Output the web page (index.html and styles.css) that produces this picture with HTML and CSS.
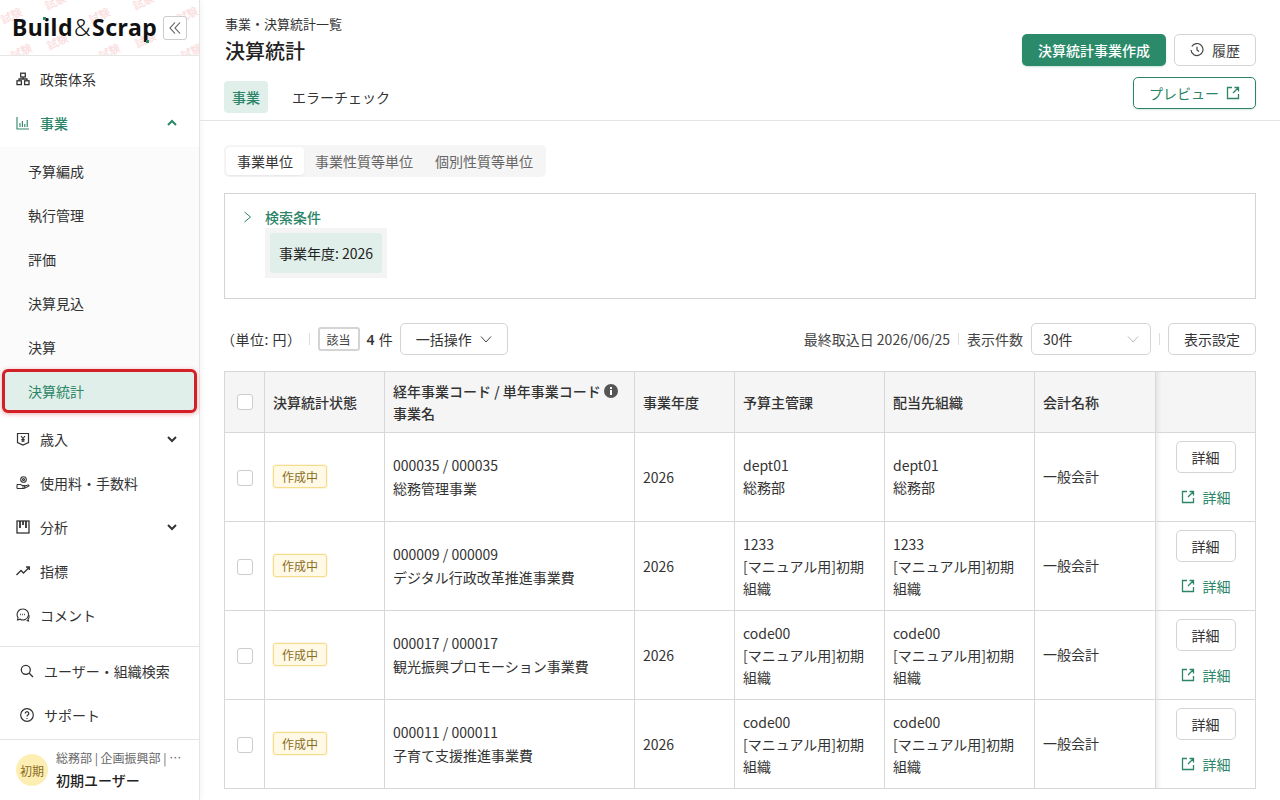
FILE: index.html
```html
<!DOCTYPE html>
<html lang="ja">
<head>
<meta charset="utf-8">
<title>決算統計</title>
<link rel="stylesheet" href="styles.css">
</head>
<body>
<div class="app">
  <aside class="sidebar">
    <div class="brand">
      <div class="marks" aria-hidden="true">
        <span class="mark m1">試験</span><span class="mark m2">試験</span><span class="mark m3">試験</span><span class="mark m4">試験</span><span class="mark m5">試験</span><span class="mark m6">試験</span><span class="mark m7">試験</span><span class="mark m8">試験</span><span class="mark m9">試験</span><span class="mark m10">試験</span>
      </div>
      <div class="logo">Build<span class="amp">&amp;</span>Scrap</div>
      <span class="dot dot-i"></span><span class="dot dot-p"></span>
      <button class="collapse"><svg width="14" height="14" viewBox="0 0 14 14" fill="none" stroke="#555" stroke-width="1.1"><path d="M7 1.500 2 7l5 5.500M12 1.500 7 7l5 5.500"/></svg></button>
    </div>
    <nav class="nav-main">
      <a class="item"><svg class="ic" viewBox="0 0 14 14" fill="none" stroke="currentColor" stroke-width="1.300"><rect x="4.700" y="1.200" width="4.600" height="3.800"/><rect x="1" y="8.800" width="4.400" height="3.800"/><rect x="8.600" y="8.800" width="4.400" height="3.800"/><path d="M3 8.800V7h8v1.800M7 5v2"/></svg>政策体系</a>
      <a class="item item-open"><svg class="ic" viewBox="0 0 14 14" fill="none" stroke="currentColor" stroke-width="1.100"><path d="M1 1v12h12M4 11V7M6.400 11V5M8.800 11V8M11.200 11V4"/></svg>事業<svg class="chev" viewBox="0 0 12 12" fill="none" stroke="currentColor" stroke-width="2"><path d="M2 8l4-4 4 4"/></svg></a>
      <div class="sub">
        <a class="sub-item">予算編成</a>
        <a class="sub-item">執行管理</a>
        <a class="sub-item">評価</a>
        <a class="sub-item">決算見込</a>
        <a class="sub-item">決算</a>
        <a class="sub-item sub-active">決算統計</a>
      </div>
      <a class="item item-after"><svg class="ic" viewBox="0 0 14 14" fill="none" stroke="currentColor" stroke-width="1.200"><path d="M1.500 1.500h11v9L7 13l-5.500-2.500z"/><path d="M5 4l2 2.500L9 4M7 6.500V10M5.300 7.500h3.400M5.300 9h3.400"/></svg>歳入<svg class="chev" viewBox="0 0 12 12" fill="none" stroke="currentColor" stroke-width="2"><path d="M2 4l4 4 4-4"/></svg></a>
      <a class="item"><svg class="ic" viewBox="0 0 14 14" fill="none" stroke="currentColor" stroke-width="1.100"><circle cx="7.500" cy="3.500" r="2.800"/><circle cx="7.500" cy="3.500" r="1"/><path d="M1 8.500h3.500l2 1h2a1 1 0 0 1 0 1.500H6M1 12.500h7l5-2.500c0-1-1-1.300-2-.8L9 10M1 8.500v4"/></svg>使用料・手数料</a>
      <a class="item"><svg class="ic" viewBox="0 0 14 14" fill="none" stroke="currentColor" stroke-width="1.300"><rect x="1" y="1" width="12" height="12"/><path d="M4 1v7M7 1v4M10 1v7" stroke-width="1.800"/></svg>分析<svg class="chev" viewBox="0 0 12 12" fill="none" stroke="currentColor" stroke-width="2"><path d="M2 4l4 4 4-4"/></svg></a>
      <a class="item"><svg class="ic" viewBox="0 0 14 14" fill="none" stroke="currentColor" stroke-width="1.300"><path d="M.5 11 5 6.500l2.500 2.500L13 3.500M10 3h3.300v3"/></svg>指標</a>
      <a class="item"><svg class="ic" viewBox="0 0 14 14" fill="none" stroke="currentColor" stroke-width="1.100"><path d="M6.500 1a5.500 5.500 0 0 0-4.500 8.500L1.500 12l2.700-.8A5.500 5.500 0 1 0 6.500 1z"/><path d="M12.500 6.500a4.500 4.500 0 0 1-.5 5l.5 1.500-2-.5"/><path d="M4.200 6.500h.8M6.200 6.500H7M8.200 6.500H9" stroke-width="1.300"/></svg>コメント</a>
    </nav>
    <div class="nav-util">
      <a class="util"><svg class="ic" viewBox="0 0 14 14" fill="none" stroke="currentColor" stroke-width="1.300"><circle cx="5.800" cy="5.800" r="4.500"/><path d="M9.200 9.200 13 13"/></svg>ユーザー・組織検索</a>
      <a class="util"><svg class="ic" viewBox="0 0 14 14" fill="none" stroke="currentColor" stroke-width="1.200"><circle cx="7" cy="7" r="6.300"/><path d="M5.200 5.500a1.800 1.800 0 1 1 2.700 1.600c-.6.400-.9.700-.9 1.400"/><path d="M7 10v.9"/></svg>サポート</a>
    </div>
    <div class="user">
      <span class="avatar">初期</span>
      <div class="user-text">
        <div class="user-org">総務部 | 企画振興部 | ⋯</div>
        <div class="user-name">初期ユーザー</div>
      </div>
    </div>
  </aside>

  <main class="main">
    <header class="head">
      <div class="head-row">
        <div class="titles">
          <div class="crumb">事業・決算統計一覧</div>
          <h1 class="title">決算統計</h1>
        </div>
        <div class="head-actions">
          <button class="btn btn-primary">決算統計事業作成</button>
          <button class="btn btn-history"><svg class="clock" viewBox="0 0 14 14" fill="none" stroke="#444" stroke-width="1.200"><path d="M1.800 3.500A6 6 0 1 1 1 7"/><path d="M7 3.800V7l2 1.500"/></svg>履歴</button>
        </div>
      </div>
      <div class="tab-row">
        <div class="tabs">
          <a class="tab tab-active">事業</a>
          <a class="tab">エラーチェック</a>
        </div>
        <button class="btn btn-preview">プレビュー<svg class="ext" viewBox="0 0 14 14" fill="none" stroke="currentColor" stroke-width="1.300"><path d="M6 1.500H1.500v11h11V8M8.500 1.500h4v4M12.500 1.500 7 7"/></svg></button>
      </div>
    </header>

    <section class="content">
      <div class="seg">
        <a class="seg-item seg-active">事業単位</a>
        <a class="seg-item">事業性質等単位</a>
        <a class="seg-item">個別性質等単位</a>
      </div>

      <div class="search">
        <div class="search-head"><svg class="search-chev" viewBox="0 0 12 12" fill="none" stroke="currentColor" stroke-width="1"><path d="M2.500 1l6 5-6 5"/></svg>検索条件</div>
        <div class="chip-wrap"><span class="chip">事業年度: 2026</span></div>
      </div>

      <div class="toolbar">
        <div class="tb-group">
          <span class="unit">（単位: 円）</span>
          <span class="sep"></span>
          <span class="hit">該当</span>
          <span class="count"><b>4</b> 件</span>
          <button class="btn btn-plain btn-bulk">一括操作<svg class="dn" viewBox="0 0 12 12" fill="none" stroke="#444" stroke-width="1"><path d="M1 3.500l5 5.500 5-5.500"/></svg></button>
        </div>
        <div class="tb-group">
          <span class="meta">最終取込日 2026/06/25</span>
          <span class="sep sep-tight"></span>
          <span class="meta">表示件数</span>
          <div class="select">30件<svg class="dn" viewBox="0 0 12 12" fill="none" stroke="#bbb" stroke-width="1"><path d="M1 3.500l5 5.500 5-5.500"/></svg></div>
          <span class="sep sep-tight"></span>
          <button class="btn btn-plain btn-settings">表示設定</button>
        </div>
      </div>

      <table class="grid">
        <colgroup>
          <col class="c-check"><col class="c-state"><col class="c-code"><col class="c-year"><col class="c-org"><col class="c-org"><col class="c-acct"><col class="c-act">
        </colgroup>
        <thead>
          <tr>
            <th class="cell-check"><span class="box box-head"></span></th>
            <th>決算統計状態</th>
            <th>経年事業コード / 単年事業コード<svg class="info" viewBox="0 0 14 14"><circle cx="7" cy="7" r="7" fill="#555"/><rect x="6" y="6" width="2" height="5" fill="#fff"/><rect x="6" y="3" width="2" height="2" fill="#fff"/></svg><br>事業名</th>
            <th>事業年度</th>
            <th>予算主管課</th>
            <th>配当先組織</th>
            <th>会計名称</th>
            <th class="cell-act"></th>
          </tr>
        </thead>
        <tbody>
          <tr>
            <td class="cell-check"><span class="box"></span></td>
            <td><span class="badge">作成中</span></td>
            <td><div class="l2">000035 / 000035</div><div class="l2">総務管理事業</div></td>
            <td>2026</td>
            <td class="cell-raise">dept01<br>総務部</td>
            <td class="cell-raise">dept01<br>総務部</td>
            <td class="cell-raise">一般会計</td>
            <td class="cell-act"><button class="btn btn-plain btn-detail">詳細</button><a class="link"><svg class="ext" viewBox="0 0 14 14" fill="none" stroke="currentColor" stroke-width="1.300"><path d="M6 1.500H1.500v11h11V8M8.500 1.500h4v4M12.500 1.500 7 7"/></svg>詳細</a></td>
          </tr>
          <tr>
            <td class="cell-check"><span class="box"></span></td>
            <td><span class="badge">作成中</span></td>
            <td><div class="l2">000009 / 000009</div><div class="l2">デジタル行政改革推進事業費</div></td>
            <td>2026</td>
            <td>1233<br>[マニュアル用]初期<br>組織</td>
            <td>1233<br>[マニュアル用]初期<br>組織</td>
            <td class="cell-raise">一般会計</td>
            <td class="cell-act"><button class="btn btn-plain btn-detail">詳細</button><a class="link"><svg class="ext" viewBox="0 0 14 14" fill="none" stroke="currentColor" stroke-width="1.300"><path d="M6 1.500H1.500v11h11V8M8.500 1.500h4v4M12.500 1.500 7 7"/></svg>詳細</a></td>
          </tr>
          <tr>
            <td class="cell-check"><span class="box"></span></td>
            <td><span class="badge">作成中</span></td>
            <td><div class="l2">000017 / 000017</div><div class="l2">観光振興プロモーション事業費</div></td>
            <td>2026</td>
            <td>code00<br>[マニュアル用]初期<br>組織</td>
            <td>code00<br>[マニュアル用]初期<br>組織</td>
            <td class="cell-raise">一般会計</td>
            <td class="cell-act"><button class="btn btn-plain btn-detail">詳細</button><a class="link"><svg class="ext" viewBox="0 0 14 14" fill="none" stroke="currentColor" stroke-width="1.300"><path d="M6 1.500H1.500v11h11V8M8.500 1.500h4v4M12.500 1.500 7 7"/></svg>詳細</a></td>
          </tr>
          <tr>
            <td class="cell-check"><span class="box"></span></td>
            <td><span class="badge">作成中</span></td>
            <td><div class="l2">000011 / 000011</div><div class="l2">子育て支援推進事業費</div></td>
            <td>2026</td>
            <td>code00<br>[マニュアル用]初期<br>組織</td>
            <td>code00<br>[マニュアル用]初期<br>組織</td>
            <td class="cell-raise">一般会計</td>
            <td class="cell-act"><button class="btn btn-plain btn-detail">詳細</button><a class="link"><svg class="ext" viewBox="0 0 14 14" fill="none" stroke="currentColor" stroke-width="1.300"><path d="M6 1.500H1.500v11h11V8M8.500 1.500h4v4M12.500 1.500 7 7"/></svg>詳細</a></td>
          </tr>
        </tbody>
      </table>
    </section>
  </main>
</div>
</body>
</html>
```
FILE: styles.css
```css
* { box-sizing: border-box; }
html, body { margin: 0; height: 100%; overflow: hidden; }
body {
  font-family: "Noto Sans CJK JP", "Noto Sans", sans-serif;
  font-size: 14px;
  color: #333;
  background: #fff;
}
button { font: inherit; color: inherit; cursor: pointer; }
.app { display: flex; height: 800px; }

/* sidebar */
.sidebar {
  width: 200px;
  flex: none;
  display: flex;
  flex-direction: column;
  border-right: 1px solid #e4e4e4;
  box-shadow: 2px 0 4px rgba(0,0,0,.04);
  background: #fff;
}
.brand {
  position: relative;
  height: 56px;
  flex: none;
  display: flex;
  align-items: center;
  justify-content: space-between;
  padding: 0 12px;
  border-bottom: 1px solid #e6e6e6;
  overflow: hidden;
}
.marks { position: absolute; inset: 0; }
.mark {
  position: absolute;
  width: 22px;
  color: #fadcde;
  font-size: 11px;
  line-height: 16px;
  font-weight: 500;
  white-space: nowrap;
  transform: rotate(-25deg);
}
.m1 { left: 0; top: 7px; }
.m2 { left: 44px; top: -7px; }
.m3 { left: 46px; top: 33px; }
.m4 { left: 10px; top: 43px; }
.m5 { left: 88px; top: 7px; }
.m6 { left: 134px; top: 31px; }
.m7 { left: 98px; top: 43px; }
.m8 { left: 132px; top: -7px; }
.m9 { left: 176px; top: 6px; }
.m10 { left: 180px; top: 43px; }
.logo {
  position: relative;
  font-family: "Noto Sans", sans-serif;
  font-size: 23px;
  font-weight: 700;
  color: #111;
  letter-spacing: .5px;
  line-height: 1;
}
.amp { font-weight: 300; margin: 0 1px; }
.dot { position: absolute; width: 3px; height: 3px; background: #2c8567; }
.dot-i { left: 43px; top: 17px; }
.dot-p { left: 146px; top: 40px; }
.collapse {
  position: relative;
  width: 24px;
  height: 24px;
  padding: 0;
  background: #fff;
  border: 1px solid #ccc;
  border-radius: 3px;
  display: flex;
  align-items: center;
  justify-content: center;
}
.nav-main { flex: 1; display: flex; flex-direction: column; padding-top: 1px; }
.item {
  height: 44px;
  flex: none;
  display: flex;
  align-items: center;
  padding-left: 16px;
  color: #333;
}
.ic { width: 14px; height: 14px; flex: none; margin-right: 10px; }
.item-open { color: #2c8567; font-weight: 500; margin-bottom: 2px; }
.chev { width: 12px; height: 12px; margin-left: auto; margin-right: 21px; }
.sub { background: #fbfbfb; padding: 2px 0; display: flex; flex-direction: column; }
.sub-item {
  height: 44px;
  flex: none;
  display: flex;
  align-items: center;
  padding-left: 28px;
}
.sub-active {
  color: #2c8567;
  margin-left: 2px;
  margin-right: 2px;
  padding-left: 23px;
  background: #e0efe9;
  border: 3px solid #d32027;
  border-radius: 6px;
  box-shadow: 0 1px 5px rgba(211,32,39,.35);
}
.item-after { margin-top: 2px; }
.nav-util { border-top: 1px solid #e4e4e4; border-bottom: 1px solid #e4e4e4; padding: 2px 0; }
.util {
  height: 44px;
  display: flex;
  align-items: center;
  padding-left: 20px;
}
.user { height: 60px; flex: none; display: flex; align-items: center; padding: 0 16px; gap: 8px; }
.avatar {
  width: 32px;
  height: 32px;
  flex: none;
  border-radius: 50%;
  background: #fdeeb3;
  color: #8a6d1e;
  font-size: 12px;
  display: flex;
  align-items: center;
  justify-content: center;
}
.user-org { font-size: 12px; color: #666; line-height: 18px; white-space: nowrap; }
.user-name { font-size: 14px; font-weight: 500; color: #222; line-height: 22px; margin-top: 2px; }

/* main */
.main { flex: 1; min-width: 0; display: flex; flex-direction: column; }
.head { padding: 0 24px 0 25px; height: 121px; flex: none; border-bottom: 1px solid #e4e4e4; }
.head-row { display: flex; justify-content: space-between; }
.crumb { font-size: 13px; line-height: 20px; margin-top: 14px; color: #333; }
.title { margin: 2px 0 0; font-size: 20px; font-weight: 500; line-height: 30px; color: #222; }
.head-actions { display: flex; gap: 8px; padding-top: 34px; }
.btn { display: inline-flex; align-items: center; justify-content: center; border-radius: 5px; background: #fff; }
.btn-primary {
  width: 144px;
  height: 32px;
  background: #2b8a69;
  border: 0;
  color: #fff;
  font-weight: 500;
  box-shadow: 0 1px 2px rgba(43,138,105,.25);
}
.btn-history { width: 82px; height: 32px; border: 1px solid #d4d4d4; gap: 8px; color: #444; }
.clock { width: 14px; height: 14px; }
.tab-row { display: flex; justify-content: space-between; align-items: flex-start; }
.tabs { display: flex; gap: 16px; margin: 15px 0 0 -1px; }
.tab { height: 32px; padding: 0 8px; display: flex; align-items: center; border-radius: 4px; color: #333; }
.tab-active { background: #e0efe9; color: #2c8567; font-weight: 500; }
.btn-preview {
  width: 123px;
  height: 32px;
  border: 1px solid #2c8567;
  color: #2c8567;
  gap: 7px;
  margin-top: 11px;
  box-shadow: 0 1px 2px rgba(43,138,105,.2);
}
.ext { width: 14px; height: 14px; flex: none; }
.content { padding: 24px 24px 0 24px; }
.seg {
  display: inline-flex;
  height: 32px;
  background: #f5f5f5;
  border-radius: 5px;
  padding: 2px;
}
.seg-item { display: flex; align-items: center; padding: 0 11px; color: #666; border-radius: 4px; }
.seg-active { background: #fff; color: #333; box-shadow: 0 1px 2px rgba(0,0,0,.06); }
.search {
  margin-top: 16px;
  height: 106px;
  border: 1px solid #d4d4d4;
  padding: 13px 0 0 17px;
}
.search-head { display: flex; align-items: center; color: #2c8567; font-weight: 500; line-height: 20px; }
.search-chev { width: 12px; height: 12px; margin-right: 11px; }
.chip-wrap { display: inline-block; margin: 1px 0 0 23px; padding: 5px; background: #f3f4f3; }
.chip { display: block; height: 40px; line-height: 40px; padding: 0 9px; background: #e0efe9; border-radius: 3px; color: #222; }
.toolbar { display: flex; justify-content: space-between; align-items: center; height: 32px; margin-top: 24px; }
.tb-group { display: flex; align-items: center; }
.unit { margin-left: -3px; color: #333; letter-spacing: .5px; }
.sep { width: 1px; height: 12px; background: #ddd; margin: 0 8px 0 7px; }
.sep-tight { margin: 0 8px; }
.hit {
  width: 42px;
  height: 24px;
  border: 2px solid #d4d4d4;
  border-radius: 3px;
  font-size: 12px;
  display: flex;
  align-items: center;
  justify-content: center;
  color: #444;
}
.count { margin: 0 7px 0 7px; }
.count b { font-family: "Noto Sans", sans-serif; font-weight: 600; margin-right: 1px; }
.btn-plain { border: 1px solid #d4d4d4; color: #333; }
.btn-bulk { width: 108px; height: 32px; gap: 8px; }
.dn { width: 12px; height: 12px; }
.meta { color: #444; }
.select {
  width: 120px;
  height: 32px;
  margin-left: 8px;
  border: 1px solid #d4d4d4;
  border-radius: 5px;
  display: flex;
  align-items: center;
  justify-content: space-between;
  padding: 0 11px;
}
.btn-settings { width: 88px; height: 32px; }
.grid {
  width: 1032px;
  margin: 16px 0 0 0;
  border-collapse: collapse;
  table-layout: fixed;
  border: 1px solid #d8d8d8;
}
.c-check { width: 40px; }
.c-state { width: 120px; }
.c-code { width: 250px; }
.c-year { width: 100px; }
.c-org { width: 150px; }
.c-acct { width: 121px; }
.c-act { width: 100px; }
.grid th, .grid td {
  border: 1px solid #d8d8d8;
  padding: 0 8px;
  text-align: left;
  vertical-align: middle;
  line-height: 22px;
  color: #333;
}
.grid th { height: 61px; background: #f5f5f5; font-weight: 500; }
.grid td { height: 89px; }
.grid .cell-check { padding: 0; text-align: center; }
.grid .cell-raise { padding-bottom: 2px; }
.box { display: inline-block; width: 16px; height: 16px; border: 1px solid #ccc; border-radius: 3px; background: #fff; vertical-align: middle; margin-bottom: 2px; }
.box-head { margin-bottom: 4px; }
.info { width: 14px; height: 14px; margin-left: 3px; vertical-align: -1px; }
.badge {
  display: inline-block;
  height: 23px;
  line-height: 21px;
  padding: 0 8px;
  font-size: 12px;
  background: #fff9e6;
  border: 1px solid #f6dd8c;
  border-radius: 3px;
  color: #8a6d1e;
  margin-bottom: 2px;
  box-shadow: 0 0 0 1px rgba(246,221,140,.25);
}
.l2 { line-height: 23px; }
.grid .cell-act {
  border-left: 1px solid #e8e8e8;
  box-shadow: inset 6px 0 5px -4px rgba(0,0,0,.08);
  padding: 0 0 4px;
  text-align: center;
}
.btn-detail { display: flex; width: 60px; height: 32px; margin: 0 auto; }
.link { display: inline-flex; align-items: center; gap: 8px; margin-top: 13px; color: #2c8567; }
```
